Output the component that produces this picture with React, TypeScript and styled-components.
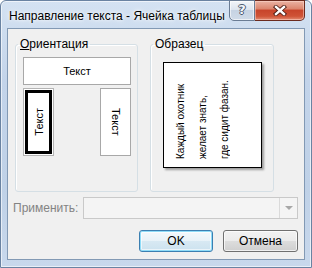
import React from "react"
import styled, { createGlobalStyle, css } from "styled-components"

const GlobalStyle = createGlobalStyle`
  html, body {
    margin: 0;
    padding: 0;
    background: #fff;
  }
  body {
    font-family: "Liberation Sans", Arial, sans-serif;
    font-size: 12px;
    color: #000;
  }
`

const Window = styled.div`
  box-sizing: border-box;
  width: 312px;
  height: 268px;
  display: flex;
  flex-direction: column;
  border: 1px solid #6a83a2;
  border-radius: 6px 6px 0 0;
  background: linear-gradient(#d4e2f2, #c3d4ea 30%, #bfd1e7 70%, #c8d8ec);
  box-shadow: inset 0 0 0 1px rgba(255, 255, 255, 0.6);
`

const TitleBar = styled.div`
  height: 27px;
  display: flex;
  align-items: flex-start;
`

const Title = styled.div`
  flex: 1;
  padding: 8px 0 0 8px;
  line-height: 14px;
  font-size: 12px;
  text-shadow: 0 0 6px #fff, 0 0 3px #fff;
`

const CaptionButtons = styled.div`
  display: flex;
  margin: -1px 6px 0 0;
`

const CaptionButton = styled.div<{ $close?: boolean }>`
  box-sizing: border-box;
  height: 21px;
  display: flex;
  align-items: center;
  justify-content: center;
  ${p =>
    p.$close
      ? css`
          width: 50px;
          border: 1px solid #6b2a1e;
          border-left: none;
          border-radius: 0 0 5px 0;
          background: linear-gradient(#eab3a4, #dc8770 40%, #c8452b 50%, #cf5336 80%, #e48c72);
          box-shadow: inset 0 0 0 1px rgba(255, 220, 210, 0.5);
        `
      : css`
          width: 26px;
          border: 1px solid #6a7c94;
          border-radius: 0 0 0 5px;
          background: linear-gradient(#f2f5f9, #dde5ef 45%, #c6d3e3 50%, #d0dbe8);
          box-shadow: inset 0 0 0 1px rgba(255, 255, 255, 0.6);
        `}
`

const HelpGlyph = styled.span`
  font-family: "DejaVu Sans", sans-serif;
  font-weight: bold;
  font-size: 13px;
  line-height: 13px;
  margin-top: -2px;
  color: #f4f6f9;
  text-shadow: -1px 0 #4a5a70, 1px 0 #4a5a70, 0 -1px #4a5a70, 0 1px #4a5a70;
`

const Client = styled.div`
  flex: 1;
  margin: 0 6px 7px 6px;
  border: 1px solid #8299b4;
  background: #f0f0f0;
  display: flex;
  flex-direction: column;
`

const GroupRow = styled.div`
  display: flex;
  gap: 12px;
  padding-left: 7px;
  margin-top: 8px;
`

const Group = styled.fieldset<{ $width: number }>`
  box-sizing: border-box;
  width: ${p => p.$width}px;
  margin: 0;
  padding: 0;
  border: 1px solid #d5dfe5;
  border-radius: 3px;
  box-shadow: inset 1px 1px 0 #fff;
`

const Legend = styled.legend`
  padding: 0 2px;
  margin-left: 2px;
  line-height: 15px;
  font-size: 12px;
`

const OrientationBody = styled.div`
  height: 139px;
  box-sizing: border-box;
  padding: 5px 0 0 7px;
  display: flex;
  flex-direction: column;
  gap: 3px;
`

const VerticalRow = styled.div`
  width: 108px;
  display: flex;
  justify-content: space-between;
`

const Option = styled.div<{ $vertical?: boolean; $selected?: boolean }>`
  box-sizing: border-box;
  width: ${p => (p.$vertical ? "31px" : "108px")};
  height: ${p => (p.$vertical ? "68px" : "28px")};
  display: flex;
  align-items: center;
  justify-content: center;
  background: #fff;
  border: 1px solid #a8a8a8;
  font-size: 11px;
  ${p =>
    p.$selected &&
    css`
      border-color: #b4b4b4;
      box-shadow: inset 0 0 0 1px #fff, inset 0 0 0 4px #000;
    `}
`

const OptionLabel = styled.span<{ $dir?: "up" | "down" }>`
  ${p =>
    p.$dir &&
    css`
      writing-mode: vertical-rl;
    `}
  ${p =>
    p.$dir === "up" &&
    css`
      transform: rotate(180deg);
    `}
`

const SampleBody = styled.div`
  height: 139px;
  box-sizing: border-box;
  padding: 10px 0 0 12px;
`

const SampleCard = styled.div`
  box-sizing: border-box;
  width: 99px;
  height: 106px;
  display: flex;
  align-items: stretch;
  background: #fff;
  border: 1px solid #000;
  box-shadow: 2px 2px 2px rgba(0, 0, 0, 0.35);
`

const SampleText = styled.div`
  box-sizing: border-box;
  height: 100%;
  writing-mode: vertical-rl;
  transform: rotate(180deg);
  padding: 8px 6px 0 0;
  font-size: 10px;
  line-height: 22px;
  white-space: nowrap;
`

const ApplyRow = styled.div`
  display: flex;
  align-items: center;
  margin-top: 5px;
  padding: 0 6px 0 5px;
`

const ApplyLabel = styled.span`
  width: 70px;
  color: #838383;
  font-size: 12px;
`

const Combo = styled.div`
  box-sizing: border-box;
  flex: 1;
  height: 22px;
  display: flex;
  justify-content: flex-end;
  border: 1px solid #c9c9c9;
  background: #f4f4f4;
`

const ComboArrow = styled.div`
  width: 17px;
  display: flex;
  align-items: center;
  justify-content: center;
  border-left: 1px solid #dadada;
  &::after {
    content: "";
    border-left: 4px solid transparent;
    border-right: 4px solid transparent;
    border-top: 4px solid #a7a7a7;
  }
`

const ButtonRow = styled.div`
  display: flex;
  justify-content: flex-end;
  gap: 10px;
  margin-top: 11px;
  padding-right: 6px;
`

const DialogButton = styled.div<{ $default?: boolean }>`
  box-sizing: border-box;
  width: ${p => (p.$default ? "74px" : "75px")};
  height: 22px;
  display: flex;
  align-items: center;
  justify-content: center;
  border-radius: 3px;
  font-size: 12px;
  ${p =>
    p.$default
      ? css`
          border: 1px solid #3c7fb1;
          background: linear-gradient(#f4f9fc, #e8f2f8 50%, #d8e9f3 50%, #cce2ef);
          box-shadow: inset 0 0 0 1px #8fdcf8, inset 0 0 0 2px rgba(255, 255, 255, 0.6);
        `
      : css`
          border: 1px solid #707070;
          background: linear-gradient(#f2f2f2, #ebebeb 50%, #dddddd 50%, #cfcfcf);
          box-shadow: inset 0 0 0 1px rgba(255, 255, 255, 0.7);
        `}
`

const CloseIcon = () => (
  <svg width="14" height="11" viewBox="0 0 14 11">
    <path d="M3 2 L11 9 M11 2 L3 9" stroke="#4a1a12" strokeWidth="4.2" strokeLinecap="square" />
    <path d="M3 2 L11 9 M11 2 L3 9" stroke="#fff" strokeWidth="2.4" strokeLinecap="square" />
  </svg>
)

export default function App() {
  return (
    <>
      <GlobalStyle />
      <Window>
        <TitleBar>
          <Title>Направление текста - Ячейка таблицы</Title>
          <CaptionButtons>
            <CaptionButton>
              <HelpGlyph>?</HelpGlyph>
            </CaptionButton>
            <CaptionButton $close>
              <CloseIcon />
            </CaptionButton>
          </CaptionButtons>
        </TitleBar>
        <Client>
          <GroupRow>
            <Group $width={123}>
              <Legend>
                <u>О</u>риентация
              </Legend>
              <OrientationBody>
                <Option>
                  <OptionLabel>Текст</OptionLabel>
                </Option>
                <VerticalRow>
                  <Option $vertical $selected>
                    <OptionLabel $dir="up">Текст</OptionLabel>
                  </Option>
                  <Option $vertical>
                    <OptionLabel $dir="down">Текст</OptionLabel>
                  </Option>
                </VerticalRow>
              </OrientationBody>
            </Group>
            <Group $width={124}>
              <Legend>Образец</Legend>
              <SampleBody>
                <SampleCard>
                  <SampleText>
                    Каждый охотник
                    <br />
                    желает знать,
                    <br />
                    где сидит фазан.
                  </SampleText>
                </SampleCard>
              </SampleBody>
            </Group>
          </GroupRow>
          <ApplyRow>
            <ApplyLabel>Применить:</ApplyLabel>
            <Combo>
              <ComboArrow />
            </Combo>
          </ApplyRow>
          <ButtonRow>
            <DialogButton $default>OK</DialogButton>
            <DialogButton>Отмена</DialogButton>
          </ButtonRow>
        </Client>
      </Window>
    </>
  )
}
